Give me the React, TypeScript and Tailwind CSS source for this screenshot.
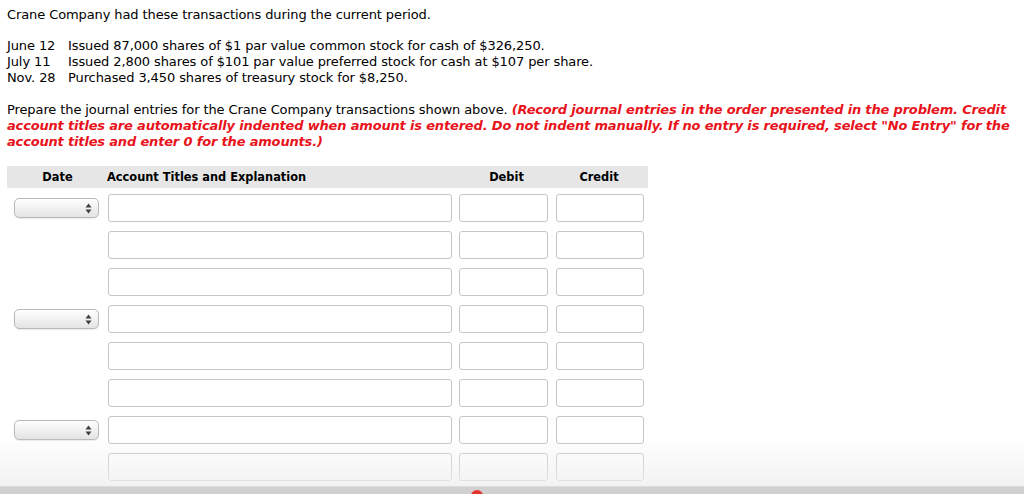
import React from 'react';

const transactions = [
  { date: 'June 12', text: 'Issued 87,000 shares of $1 par value common stock for cash of $326,250.' },
  { date: 'July 11', text: 'Issued 2,800 shares of $101 par value preferred stock for cash at $107 per share.' },
  { date: 'Nov. 28', text: 'Purchased 3,450 shares of treasury stock for $8,250.' },
];

// which rows carry a date picker
const rows = [true, false, false, true, false, false, true, false];

const DateSelect: React.FC = () => (
  <div className="ml-[7px] flex h-[20px] w-[85px] items-center justify-end rounded-[5px] border border-[#b9b9b9] bg-gradient-to-b from-[#ffffff] to-[#e4e4e4] pr-[6px] shadow-[0_1px_1px_rgba(0,0,0,0.08)]">
    <svg width="7" height="11" viewBox="0 0 7 11">
      <path d="M3.5 0.5 L6.5 4.5 L0.5 4.5 Z" fill="#3f3f3f" />
      <path d="M3.5 10.5 L6.5 6.5 L0.5 6.5 Z" fill="#3f3f3f" />
    </svg>
  </div>
);

const Box: React.FC<{ className: string }> = ({ className }) => (
  <div className={`h-[28px] rounded-[3px] border border-[#c6c6c6] bg-white ${className}`} />
);

export default function App() {
  return (
    <div className="relative h-[494px] w-[1024px] overflow-hidden bg-white font-['DejaVu_Sans',Verdana,sans-serif] text-[13px] leading-[16px] tracking-[-0.1px] text-black">
      <div className="pl-[7px] pt-[7px]">
        <p>Crane Company had these transactions during the current period.</p>

        <div className="mt-[15px]">
          {transactions.map((t) => (
            <div key={t.date} className="flex">
              <span className="w-[61px] shrink-0">{t.date}</span>
              <span>{t.text}</span>
            </div>
          ))}
        </div>

        <p className="mt-[16px] whitespace-nowrap">
          Prepare the journal entries for the Crane Company transactions shown above.{' '}
          <span className="font-bold italic tracking-[-0.17px] text-[#e8131b]">
            (Record journal entries in the order presented in the problem. Credit
            <br />
            account titles are automatically indented when amount is entered. Do not indent manually. If no entry
            is required, select "No Entry" for the
            <br />
            account titles and enter 0 for the amounts.)
          </span>
        </p>
      </div>

      <div className="ml-[7px] mt-[16px] w-[641px]">
        <div className="flex h-[22px] items-center bg-[#e6e6e6] text-[11.4px] font-bold tracking-normal">
          <div className="w-[100px] pl-[1px] text-center">Date</div>
          <div className="w-[351px]">Account Titles and Explanation</div>
          <div className="w-[97px] text-center">Debit</div>
          <div className="w-[88px] text-center">Credit</div>
        </div>

        <div className="mt-[6px] flex flex-col gap-[9px]">
          {rows.map((hasDate, i) => (
            <div key={i} className="flex items-center">
              <div className="w-[101px]">{hasDate && <DateSelect />}</div>
              <Box className="w-[344px]" />
              <Box className="ml-[7px] w-[89px]" />
              <Box className="ml-[8px] w-[88px]" />
            </div>
          ))}
        </div>
      </div>

      {/* window chrome fade at the bottom of the capture */}
      <div className="pointer-events-none absolute bottom-[8px] left-0 right-0 h-[50px] bg-gradient-to-b from-[rgba(238,238,238,0)] to-[rgba(238,238,238,0.75)]" />
      <div className="pointer-events-none absolute bottom-0 left-0 right-0 h-[8px] border-t border-[#dcdcdc] bg-[#d0d0d0]">
        <div className="absolute left-[471px] top-[3px] h-[12px] w-[12px] rounded-full bg-[#e5322d]" />
      </div>
    </div>
  );
}
